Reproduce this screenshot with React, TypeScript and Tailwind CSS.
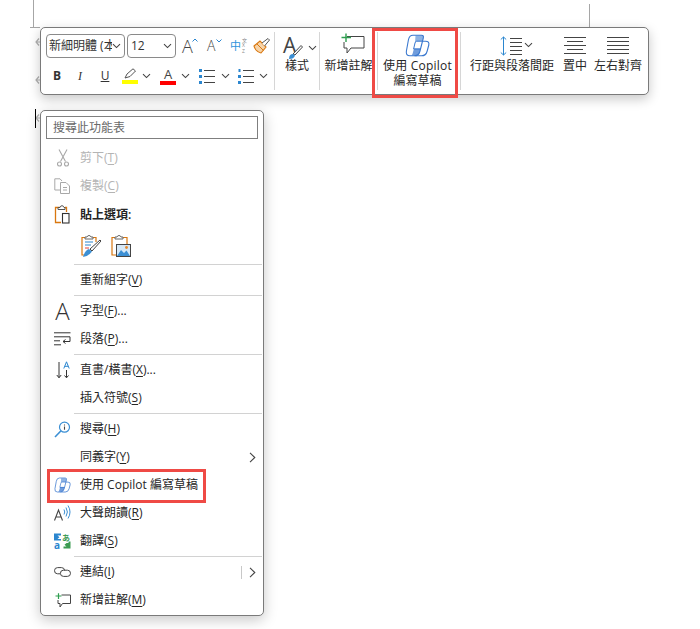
import React from 'react';

const CJK = { fontFamily: '"Open Sans", "Noto Sans CJK TC", sans-serif' };

const Chev = ({ className = '' }: { className?: string }) => (
  <svg width="9" height="6" viewBox="0 0 9 6" className={className}>
    <path d="M1 1.2 L4.5 4.6 L8 1.2" fill="none" stroke="#444" strokeWidth="1.1" />
  </svg>
);

const MarginArrow = ({ className = '' }: { className?: string }) => (
  <svg width="6" height="8" viewBox="0 0 6 8" className={`absolute left-[35px] ${className}`}>
    <path d="M4 .5 L1 4 L4 7.5 M1 4 H6" fill="none" stroke="#b0b0b0" strokeWidth="1.2" />
  </svg>
);

const CopilotIcon = ({ w = 25, h = 23 }: { w?: number; h?: number }) => (
  <svg width={w} height={h} viewBox="0 0 25 23">
    <path d="M10.5 1.5 H16.5 Q18.8 1.5 18.2 4 L17.3 7.2 H11.5 Q10.5 7.2 10 9 Z" fill="#8fb4e4" />
    <path d="M6.5 21.5 H10 Q13.8 21.5 15 17 L15.6 14.5 H9 L8.3 17 Q7.8 20 6.5 21.5 Z" fill="#6f9cdc" />
    <path d="M8 1.2 H16.5 Q19 1.2 18.3 4 L15 17 Q13.8 21.8 9.5 21.8 H5 Q.6 21.8 1.4 17 L3.4 6 Q4.2 1.2 8 1.2 Z" fill="none" stroke="#3a78cf" strokeWidth="1.1" />
    <path d="M17.5 7.2 H20.5 Q24.6 7.2 23.8 11 L22.2 17 Q21 21.8 16.5 21.8 H9.5" fill="none" stroke="#3a78cf" strokeWidth="1.1" />
    <path d="M17.5 7.2 H11.7 Q10.4 7.2 10 9 L8.6 15 H15.4" fill="none" stroke="#3a78cf" strokeWidth="1" />
  </svg>
);

const Paste = () => (
  <svg width="18" height="20" viewBox="0 0 18 20">
    <path d="M7 2.5 H1.5 V17.5 H7" fill="none" stroke="#d9770f" strokeWidth="1.3" />
    <path d="M11 2.5 H12.5 V7" fill="none" stroke="#d9770f" strokeWidth="1.3" />
    <path d="M4 4.5 V2.5 H6 Q6.5 .7 8 .7 Q9.5 .7 10 2.5 H11 V4.5 Z" fill="#fff" stroke="#555" strokeWidth="1" />
    <rect x="8.5" y="8.5" width="6.5" height="9.5" fill="#fff" stroke="#333" strokeWidth="1.1" />
  </svg>
);

const icons: Record<string, React.ReactNode> = {
  cut: (
    <svg width="12" height="18" viewBox="0 0 12 18" fill="none" stroke="#a8a8a8" strokeWidth="1.1">
      <path d="M2 0.5 L8.5 12.5 M10 0.5 L3.5 12.5" />
      <circle cx="2.5" cy="15" r="2" />
      <circle cx="9.5" cy="15" r="2" />
    </svg>
  ),
  copy: (
    <svg width="17" height="16" viewBox="0 0 17 16" fill="none" stroke="#a8a8a8" strokeWidth="1">
      <path d="M6 12 H.8 V.8 H6 L8 3" />
      <path d="M6.5 4.5 H12 L15.5 8 V15.5 H6.5 Z" fill="#fff" />
      <path d="M9 9.5 H13 M9 12 H13" />
    </svg>
  ),
  para: (
    <svg width="17" height="14" viewBox="0 0 17 14" fill="none" stroke="#333" strokeWidth="1">
      <path d="M0 .8 H16.5 M0 4.8 H16 V9.5 H9 M0 8.8 H6 M0 12.8 H7" />
      <path d="M11.5 7.5 L9 9.5 L11.5 11.5" />
    </svg>
  ),
  dir: (
    <svg width="14" height="18" viewBox="0 0 14 18" fill="none" strokeWidth="1">
      <path d="M3 1 V16.5 M.8 14 L3 16.8 L5.2 14" stroke="#333" />
      <path d="M10.5 9 V16.5 M8.5 14.5 L10.5 16.8 L12.5 14.5" stroke="#333" />
      <path d="M7.8 7.5 L10.5 .8 L13.2 7.5 M8.8 5.3 H12.2" stroke="#2b86cf" />
    </svg>
  ),
  search: (
    <svg width="17" height="17" viewBox="0 0 17 17" fill="none">
      <circle cx="10.5" cy="6.2" r="5" stroke="#3b8fd4" strokeWidth="1.2" />
      <path d="M6.8 10 L1 16" stroke="#3b8fd4" strokeWidth="1.6" />
      <path d="M10.5 3.6 V4.6 M10.5 5.6 V8.8" stroke="#444" strokeWidth="1.1" />
    </svg>
  ),
  copilot: <CopilotIcon w={17} h={16} />,
  read: (
    <svg width="17" height="16" viewBox="0 0 17 16" fill="none">
      <path d="M.5 15.5 L4.5 5 L8.5 15.5 M1.8 12 H7.2" stroke="#444" strokeWidth="1.1" />
      <path d="M10 4.5 Q11.5 7 10 9.5 M12 2.5 Q14.8 7 12 11.5 M14 .5 Q18 7 14 13.5" stroke="#3b8fd4" strokeWidth="1" />
    </svg>
  ),
  translate: (
    <svg width="17" height="16" viewBox="0 0 17 16" className="overflow-visible">
      <path d="M0 .5 H7 V2.5 H3.5 L5.5 4.3 L3.5 6 H7 V7.5 H0 Z" fill="#2b86cf" />
      <text x="0" y="15.5" fontSize="10" fontWeight="700" fill="#2b86cf" fontFamily="Open Sans, sans-serif">a</text>
      <text x="8" y="8" fontSize="8" fontWeight="700" fill="#3d9b52" fontFamily="Noto Sans CJK JP, sans-serif">あ</text>
      <path d="M16.5 8.5 V15.5 H9.5 V13.5 H12.5 L10.5 11.7 L12.5 10 H14.5 V8.5 Z" fill="#3d9b52" />
    </svg>
  ),
  link: (
    <svg width="17" height="10" viewBox="0 0 17 10" fill="none" stroke="#444" strokeWidth="1">
      <path d="M6 6.8 H3.6 A3.1 3.1 0 0 1 3.6 .6 H7.5 A3.1 3.1 0 0 1 10.6 3.5" />
      <path d="M6.4 6.3 A3.1 3.1 0 0 1 9.5 3.2 H13.4 A3.1 3.1 0 0 1 13.4 9.4 H9.5 A3.1 3.1 0 0 1 6.4 6.3" />
    </svg>
  ),
  comment: (
    <svg width="16" height="15" viewBox="0 0 16 15" fill="none">
      <path d="M6.5 2 H15.5 V10.5 H7.5 L5 14 V10.5 H3 V7" stroke="#444" strokeWidth="1" />
      <path d="M3.5 .2 V6 M.5 3 H6.5" stroke="#2e9e4f" strokeWidth="1.2" />
    </svg>
  ),
};

const Key = ({ k }: { k: string }) => <span className="underline underline-offset-2">{k}</span>;

const Row = ({
  icon,
  label,
  k,
  tail,
  disabled,
  bold,
  arrow,
  split,
}: {
  icon?: React.ReactNode;
  label: string;
  k?: string;
  tail?: string;
  disabled?: boolean;
  bold?: boolean;
  arrow?: boolean;
  split?: boolean;
}) => (
  <div className={`h-7 flex items-center text-[12px] ${disabled ? 'text-[#b4b4b4]' : 'text-[#262626]'} ${bold ? 'font-semibold' : ''}`}>
    <div className="w-[39px] flex justify-center pl-[4px] shrink-0">{icon}</div>
    <span className="whitespace-pre">
      {label}
      {k && (
        <>
          (<Key k={k} />)
        </>
      )}
      {tail}
    </span>
    {arrow && (
      <div className="ml-auto flex items-center mr-[7px]">
        {split && <div className="w-px h-[13px] bg-[#c8c8c8] mr-[7px]" />}
        <svg width="7" height="11" viewBox="0 0 7 11">
          <path d="M1 .8 L5.8 5.5 L1 10.2" fill="none" stroke="#444" strokeWidth="1.1" />
        </svg>
      </div>
    )}
  </div>
);

const Sep = ({ className = '' }: { className?: string }) => (
  <div className={`h-px bg-[#d2d2d2] ml-[33px] mr-px ${className}`} />
);

const ToolSep = () => <div className="w-px h-[58px] bg-[#d6d6d6] shrink-0 self-center" />;

const ToolLabel = ({ children }: { children: React.ReactNode }) => (
  <div className="text-[12px] leading-[15px] text-[#262626] text-center whitespace-nowrap">{children}</div>
);

const Toolbar = () => (
  <div className="relative z-10 ml-[40px] w-[609px] h-[68px] bg-white border border-[#7a7a7a] rounded-[5px] shadow-[0_4px_12px_rgba(0,0,0,0.22)] flex items-stretch pl-[5px]">
    <div className="w-[228px] shrink-0 flex flex-col pt-[6px]">
      <div className="flex items-center h-6">
        <div className="w-[79px] h-6 border border-[#8a8a8a] rounded-[4px] flex items-center pl-[2px] pr-[3px] text-[12px] text-[#333] overflow-hidden">
          <span className="whitespace-nowrap overflow-hidden flex-1">新細明體 (本</span>
          <Chev />
        </div>
        <div className="w-[49px] h-6 ml-[2px] border border-[#8a8a8a] rounded-[4px] flex items-center justify-between pl-[3px] pr-[3px] text-[12px] text-[#333]">
          <span>12</span>
          <Chev />
        </div>
        <div className="relative ml-[6px] w-[16px] text-[18px] leading-6 font-light text-[#444]">
          A
          <svg width="6" height="4" viewBox="0 0 6 4" className="absolute left-[10px] top-[4px]">
            <path d="M.5 3.5 L3 1 L5.5 3.5" fill="none" stroke="#2b86cf" />
          </svg>
        </div>
        <div className="relative ml-[9px] w-[14px] text-[14px] leading-6 font-light text-[#444]">
          A
          <svg width="6" height="4" viewBox="0 0 6 4" className="absolute left-[9px] top-[5px]">
            <path d="M.5 .5 L3 3 L5.5 .5" fill="none" stroke="#2b86cf" />
          </svg>
        </div>
        <div className="ml-[9px] w-[17px] flex items-center">
          <span className="text-[11px] leading-6 w-[11px] text-[#2f94dc]">中</span>
          <span className="ml-px text-[5px] leading-[5.5px] w-[5px] text-[#888]">文<br />X<br />Z</span>
        </div>
        <svg width="17" height="16" viewBox="0 0 17 16" className="ml-[6px]" fill="none">
          <path d="M1 8 L7 3 L13 9 L8 15 Q5 14.5 3 12 Q1.5 10 1 8 Z" fill="#f6d3a8" stroke="#d9770f" strokeWidth="1.1" />
          <path d="M4 6 L10.5 12.5" stroke="#d9770f" />
          <path d="M9 5 L15 .5 L16.5 2 L11.5 8" fill="#fff" stroke="#555" />
        </svg>
      </div>
      <div className="flex items-center h-6 mt-[6px] text-[#333]">
        <div className="w-[22px] -mt-px text-center text-[12px] font-bold">B</div>
        <div className="w-[14px] ml-[5px] -mt-px text-center text-[12px] italic" style={{ fontFamily: '"Liberation Serif", serif' }}>I</div>
        <div className="w-[14px] ml-[11px] -mt-px text-center text-[12px] underline">U</div>
        <div className="ml-[9px] w-[17px] flex flex-col items-center">
          <svg width="14" height="11" viewBox="0 0 14 11" fill="none">
            <path d="M2 10 L4 6 L10 .8 L12.5 3 L7 8.5 Z" fill="#fff" stroke="#555" />
          </svg>
          <div className="w-[16px] h-[4px] bg-[#ffff00] mt-px" />
        </div>
        <Chev className="ml-[4px]" />
        <div className="ml-[9px] w-[16px] flex flex-col items-center">
          <span className="text-[13px] leading-[12px] text-[#444]">A</span>
          <div className="w-[16px] h-[4px] bg-[#ff0000] mt-px" />
        </div>
        <Chev className="ml-[5px]" />
        <svg width="16" height="15" viewBox="0 0 16 15" className="ml-[9px]">
          <rect x="0" y="0" width="3" height="3" fill="#2b86cf" />
          <rect x="0" y="6" width="3" height="3" fill="#2b86cf" />
          <rect x="0" y="12" width="3" height="3" fill="#2b86cf" />
          <path d="M5 1.5 H16 M5 7.5 H16 M5 13.5 H16" stroke="#444" />
        </svg>
        <Chev className="ml-[6px]" />
        <svg width="16" height="15" viewBox="0 0 16 15" className="ml-[8px]">
          <rect x="0.5" y="0" width="2" height="3" fill="#2b86cf" />
          <rect x="0" y="6" width="3" height="3" fill="#2b86cf" />
          <rect x="0" y="12" width="3" height="3" fill="#2b86cf" />
          <path d="M5 1.5 H16 M5 7.5 H16 M5 13.5 H16" stroke="#444" />
        </svg>
        <Chev className="ml-[5px]" />
      </div>
    </div>
    <ToolSep />
    <div className="w-[44px] shrink-0 flex flex-col items-center pt-[6px]">
      <div className="relative h-[26px] w-[30px]">
        <span className="absolute left-[1px] top-[-3px] text-[21px] leading-[28px] text-[#444]">A</span>
        <svg width="16" height="16" viewBox="0 0 16 16" className="absolute left-[6px] top-[9px]">
          <path d="M5 11 L13 2.5 L14.5 4 L7 12 Z" fill="#fff" stroke="#444" />
          <path d="M1 16 Q1 11 5 11 L7 12.5 Q6 16 1 16 Z" fill="#3b8fd4" />
        </svg>
        <Chev className="absolute left-[26px] top-[11px]" />
      </div>
      <div className="-mt-[2px]"><ToolLabel>樣式</ToolLabel></div>
    </div>
    <ToolSep />
    <div className="w-[57px] shrink-0 flex flex-col items-center pt-[5px]">
      <svg width="25" height="23" viewBox="0 0 25 23" fill="none" className="ml-[8px]">
        <path d="M7 3.5 H24 V15 H11 L7 20 V15 H4 V9" stroke="#444" strokeWidth="1" />
        <path d="M6 .5 V9 M1.5 4.5 H11" stroke="#2e9e4f" strokeWidth="1.4" />
      </svg>
      <div className="mt-[2px]"><ToolLabel>新增註解</ToolLabel></div>
    </div>
    <ToolSep />
    <div className="w-[82px] shrink-0 flex flex-col items-center pt-[6px] pr-[3px]">
      <CopilotIcon />
      <div className="mt-px"><ToolLabel><span className="tracking-[0.2px]">使用 Copilot</span><br />編寫草稿</ToolLabel></div>
    </div>
    <ToolSep />
    <div className="w-[102px] shrink-0 flex flex-col items-center pt-[8px]">
      <div className="flex items-start h-[20px] ml-[8px]">
        <svg width="23" height="20" viewBox="0 0 23 20" fill="none">
          <path d="M3.5 1 V19 M.8 3.5 L3.5 1 L6.2 3.5 M.8 16.5 L3.5 19 L6.2 16.5" stroke="#2b86cf" />
          <path d="M10 2.5 H22 M10 6.5 H22 M10 10.5 H22 M10 14.5 H22 M10 18.5 H22" stroke="#444" />
        </svg>
        <Chev className="ml-[1px] mt-[6px]" />
      </div>
      <div className="mt-[2px]"><ToolLabel>行距與段落間距</ToolLabel></div>
    </div>
    <div className="w-[32px] shrink-0 flex flex-col items-center pt-[9px] ml-[-4px]">
      <svg width="22" height="17" viewBox="0 0 22 17" fill="none" stroke="#444">
        <path d="M0 .5 H22 M3 4.5 H19 M0 8.5 H22 M3 12.5 H19 M0 16.5 H22" />
      </svg>
      <div className="mt-[4px]"><ToolLabel>置中</ToolLabel></div>
    </div>
    <div className="w-[54px] shrink-0 flex flex-col items-center pt-[9px]">
      <svg width="22" height="17" viewBox="0 0 22 17" fill="none" stroke="#444">
        <path d="M0 .5 H22 M0 4.5 H22 M0 8.5 H22 M0 12.5 H22 M0 16.5 H22" />
      </svg>
      <div className="mt-[4px]"><ToolLabel>左右對齊</ToolLabel></div>
    </div>
    <div className="absolute left-[331px] top-0 w-[86px] h-[70px] border-[3px] border-[#ef4a45]" />
  </div>
);

const Menu = () => (
  <div className="relative z-10 ml-[40px] mt-[15px] w-[224px] h-[506px] bg-white border border-[#7a7a7a] rounded-[5px] shadow-[0_4px_14px_rgba(0,0,0,0.22)] pt-[5px]">
    <div className="mx-[5px] h-[23px] border border-[#7f7f7f] flex items-center pl-[6px] text-[12px] text-[#6a6a6a]">搜尋此功能表</div>
    <div className="mt-[5px]">
      <Row icon={icons.cut} label="剪下" k="T" disabled />
      <Row icon={icons.copy} label="複製" k="C" disabled />
      <div className="mt-px">
        <Row icon={<Paste />} label="貼上選項:" bold />
      </div>
      <div className="h-[33px] flex items-center pl-[40px] gap-[10px]">
        <svg width="20" height="22" viewBox="0 0 20 22" fill="none">
          <path d="M5 2.5 H1 V20 H5 M11 2.5 H15 V7" stroke="#d9770f" strokeWidth="1.2" />
          <path d="M4 4 V2 H6 Q6.5 .5 8 .5 Q9.5 .5 10 2 H12 V4 Z" fill="#fff" stroke="#666" />
          <path d="M4 7 H12 M4 10 H10" stroke="#2b86cf" />
          <path d="M4 13 H8" stroke="#e0403a" />
          <path d="M9 14 L19 5 L20 6 L11 16 Z" fill="#fff" stroke="#444" />
          <path d="M2 22 Q4 15 8 14 L11 16.5 Q8 21 2 22 Z" fill="#3b8fd4" />
        </svg>
        <svg width="20" height="22" viewBox="0 0 20 22" fill="none">
          <path d="M5 2.5 H1 V20 H5 M11 2.5 H16 V9" stroke="#d9770f" strokeWidth="1.2" />
          <path d="M4 4 V2 H6 Q6.5 .5 8 .5 Q9.5 .5 10 2 H12 V4 Z" fill="#fff" stroke="#666" />
          <rect x="5.5" y="9.5" width="14" height="12" fill="#d6e8f7" stroke="#444" />
          <path d="M6 21 L10 15 L13 18 L15.5 15.5 L19 21 Z" fill="#3b8fd4" />
          <circle cx="15.5" cy="12.5" r="1.4" fill="#e88a2c" />
        </svg>
      </div>
    </div>
    <Sep className="mt-[2px] mb-px" />
    <Row label="重新組字" k="V" />
    <Sep className="mt-px mb-px" />
    <Row icon={<span className="text-[24px] leading-7 font-light text-[#333]">A</span>} label="字型" k="F" tail="..." />
    <Row icon={icons.para} label="段落" k="P" tail="..." />
    <Sep className="mt-px mb-px" />
    <Row icon={icons.dir} label="直書/橫書" k="X" tail="..." />
    <Row label="插入符號" k="S" />
    <Sep className="mt-px mb-px" />
    <Row icon={icons.search} label="搜尋" k="H" />
    <Row label="同義字" k="Y" arrow />
    <Row icon={icons.copilot} label="使用 Copilot 編寫草稿" />
    <Row icon={icons.read} label="大聲朗讀" k="R" />
    <Row icon={icons.translate} label="翻譯" k="S" />
    <Sep className="mt-px mb-px" />
    <Row icon={icons.link} label="連結" k="I" arrow split />
    <Row icon={icons.comment} label="新增註解" k="M" />
    <div className="absolute left-[6px] top-[358px] w-[159px] h-[34px] border-[3px] border-[#ef4a45]" />
  </div>
);

export default function App() {
  return (
    <div className="relative w-[700px] h-[629px] bg-white overflow-hidden pt-[27px]" style={CJK}>
      {/* page margin marks behind the floating bars */}
      <div className="absolute left-[33px] top-0 w-px h-[27px] bg-[#a6a6a6]" />
      <div className="absolute left-[30px] top-[27px] w-[10px] h-px bg-[#a6a6a6]" />
      <div className="absolute left-[589px] top-[4px] w-px h-[23px] bg-[#a6a6a6]" />
      <MarginArrow className="top-[38px]" />
      <MarginArrow className="top-[76px]" />
      <MarginArrow className="top-[114px]" />
      <Toolbar />
      <Menu />
      <div className="absolute z-20 left-[35px] top-[109px] w-px h-[19px] bg-black" />
    </div>
  );
}
